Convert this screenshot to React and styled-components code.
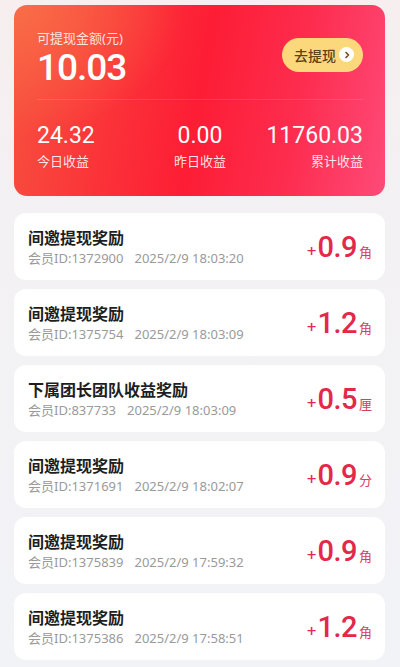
import React from "react";
import styled, { createGlobalStyle } from "styled-components";

const GlobalStyle = createGlobalStyle`
  html, body {
    margin: 0;
    padding: 0;
  }
  body {
    font-family: "Noto Sans", "Noto Sans CJK SC", sans-serif;
    background: #f3f3f6;
  }
`;

const Page = styled.div`
  width: 400px;
  min-height: 667px;
  box-sizing: border-box;
  padding: 5px 15px 0 14px;
  background: linear-gradient(180deg, #f6eeef 0%, #f3f1f4 35%, #f2f3f7 100%);
  display: flex;
  flex-direction: column;
`;

const Header = styled.div`
  height: 191px;
  border-radius: 13px;
  background:
    radial-gradient(ellipse 170px 130px at 0% 0%, rgba(249, 112, 72, 0.9), rgba(249, 112, 72, 0) 100%),
    linear-gradient(100deg, #f7523f 0%, #fb3138 30%, #fd1d35 50%, #fd2d4f 75%, #fe4a78 100%);
  padding: 24px 22px 0 23px;
  box-sizing: border-box;
  color: #fff;
  display: flex;
  flex-direction: column;
`;

const TopRow = styled.div`
  display: flex;
  justify-content: space-between;
  align-items: center;
  padding-bottom: 13px;
  border-bottom: 1px solid rgba(255, 255, 255, 0.12);
`;

const Balance = styled.div`
  display: flex;
  flex-direction: column;
  gap: 3px;
`;

const SmallLabel = styled.div`
  font-size: 13px;
  line-height: 18px;
  color: rgba(255, 255, 255, 0.85);
`;

const BigNumber = styled.div`
  font-family: "Roboto", "Noto Sans", sans-serif;
  font-size: 37px;
  line-height: 36px;
  font-weight: 500;
  letter-spacing: -1px;
`;

const WithdrawButton = styled.button`
  height: 34px;
  width: 81px;
  border: none;
  border-radius: 17px;
  background: #fcd87c;
  color: #5f4216;
  font-family: "Noto Sans CJK SC", sans-serif;
  font-size: 14px;
  font-weight: 500;
  display: flex;
  align-items: center;
  justify-content: space-between;
  padding: 0 9px 0 12px;
  box-sizing: border-box;
  margin-bottom: 6px;
`;

const ArrowDot = styled.span`
  width: 15px;
  height: 15px;
  border-radius: 50%;
  background: #fff;
  display: flex;
  align-items: center;
  justify-content: center;
`;

const Stats = styled.div`
  display: grid;
  grid-template-columns: 1fr 1fr 1fr;
  padding-top: 23px;
`;

const Stat = styled.div`
  display: flex;
  flex-direction: column;
  align-items: ${(p) => p.$align};
`;

const StatValue = styled.div`
  font-family: "Roboto", "Noto Sans", sans-serif;
  font-size: 23px;
  line-height: 26px;
  font-weight: 400;
`;

const StatLabel = styled.div`
  font-size: 13px;
  line-height: 18px;
  margin-top: 3px;
  color: rgba(255, 255, 255, 0.88);
`;

const List = styled.div`
  display: flex;
  flex-direction: column;
  gap: 9px;
  margin-top: 17px;
`;

const Card = styled.div`
  height: 67px;
  background: #fff;
  border-radius: 12px;
  padding: 0 13px 0 14px;
  box-sizing: border-box;
  display: flex;
  align-items: center;
  justify-content: space-between;
`;

const Info = styled.div`
  display: flex;
  flex-direction: column;
  gap: 2px;
`;

const Title = styled.div`
  font-family: "Noto Sans CJK SC", sans-serif;
  font-size: 16px;
  line-height: 20px;
  font-weight: 700;
  color: #1e1e1e;
`;

const Meta = styled.div`
  font-family: "Noto Sans", "Noto Sans CJK SC", sans-serif;
  font-size: 13px;
  line-height: 18px;
  color: #9a9a9a;
  display: flex;
  gap: 11px;
`;

const Amount = styled.div`
  display: flex;
  align-items: baseline;
  color: #e3284a;
`;

const Plus = styled.span`
  font-size: 17px;
  font-weight: 500;
  margin-right: 1px;
`;

const Value = styled.span`
  font-family: "Roboto", "Noto Sans", sans-serif;
  font-size: 29px;
  font-weight: 500;
  letter-spacing: -0.5px;
`;

const Unit = styled.span`
  font-family: "Noto Sans CJK SC", sans-serif;
  font-size: 13px;
  margin-left: 2px;
  color: #d6405c;
`;

const records = [
  { title: "间邀提现奖励", id: "1372900", time: "2025/2/9 18:03:20", value: "0.9", unit: "角" },
  { title: "间邀提现奖励", id: "1375754", time: "2025/2/9 18:03:09", value: "1.2", unit: "角" },
  { title: "下属团长团队收益奖励", id: "837733", time: "2025/2/9 18:03:09", value: "0.5", unit: "厘" },
  { title: "间邀提现奖励", id: "1371691", time: "2025/2/9 18:02:07", value: "0.9", unit: "分" },
  { title: "间邀提现奖励", id: "1375839", time: "2025/2/9 17:59:32", value: "0.9", unit: "角" },
  { title: "间邀提现奖励", id: "1375386", time: "2025/2/9 17:58:51", value: "1.2", unit: "角" },
];

const App = () => {
  return (
    <>
      <GlobalStyle />
      <Page>
        <Header>
          <TopRow>
            <Balance>
              <SmallLabel>可提现金额(元)</SmallLabel>
              <BigNumber>10.03</BigNumber>
            </Balance>
            <WithdrawButton>
              去提现
              <ArrowDot>
                <svg width="8" height="8" viewBox="0 0 8 8">
                  <path d="M3 1.5 L5.5 4 L3 6.5" fill="none" stroke="#6a4a1c" strokeWidth="1.6" strokeLinecap="round" strokeLinejoin="round" />
                </svg>
              </ArrowDot>
            </WithdrawButton>
          </TopRow>
          <Stats>
            <Stat $align="flex-start">
              <StatValue>24.32</StatValue>
              <StatLabel>今日收益</StatLabel>
            </Stat>
            <Stat $align="center">
              <StatValue>0.00</StatValue>
              <StatLabel>昨日收益</StatLabel>
            </Stat>
            <Stat $align="flex-end">
              <StatValue>11760.03</StatValue>
              <StatLabel>累计收益</StatLabel>
            </Stat>
          </Stats>
        </Header>
        <List>
          {records.map((r, i) => (
            <Card key={i}>
              <Info>
                <Title>{r.title}</Title>
                <Meta>
                  <span>会员ID:{r.id}</span>
                  <span>{r.time}</span>
                </Meta>
              </Info>
              <Amount>
                <Plus>+</Plus>
                <Value>{r.value}</Value>
                <Unit>{r.unit}</Unit>
              </Amount>
            </Card>
          ))}
        </List>
      </Page>
    </>
  );
};

export default App;
